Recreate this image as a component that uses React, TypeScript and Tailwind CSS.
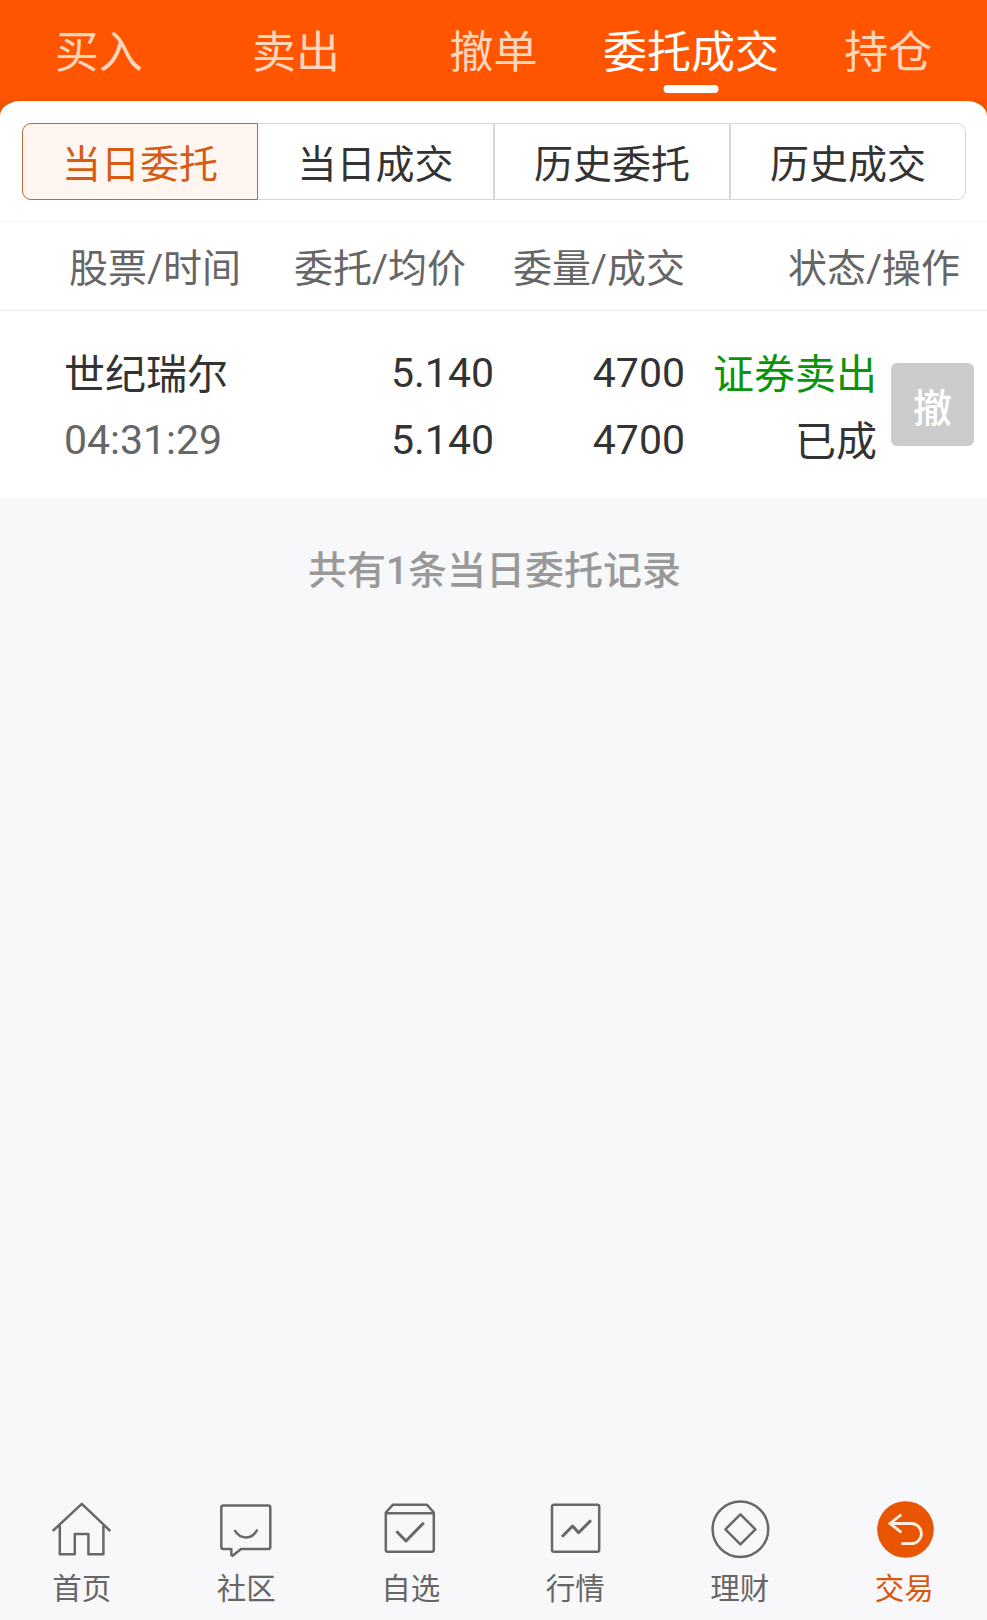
import type { ReactNode } from "react";

const tabs = ["买入", "卖出", "撤单", "委托成交", "持仓"];
const subTabs = ["当日委托", "当日成交", "历史委托", "历史成交"];

function Icon({ children }: { children: ReactNode }) {
  return (
    <svg
      className="h-[60px] w-[60px] shrink-0 overflow-visible"
      viewBox="0 0 60 60"
      fill="none"
      stroke="#686868"
      strokeWidth="2.5"
      strokeLinejoin="round"
    >
      {children}
    </svg>
  );
}

const navItems: { label: string; icon: ReactNode }[] = [
  {
    label: "首页",
    icon: (
      <Icon>
        <path d="M.7 32 29.8 4.8 58.3 32M7.8 26.5V55.3H22.8V35H36.4V55.3H51.4V26.5" />
      </Icon>
    ),
  },
  {
    label: "社区",
    icon: (
      <Icon>
        <path d="M6.3 6.5H51.3a2 2 0 0 1 2 2V48a2 2 0 0 1-2 2H24L15.6 56.8 14.3 56V50H6.3a2 2 0 0 1-2-2V8.5a2 2 0 0 1 2-2Z" />
        <path d="M17.6 31C23 41 35.5 41 40.3 30.5" />
      </Icon>
    ),
  },
  {
    label: "自选",
    icon: (
      <Icon>
        <path d="M12 5.7H45.8L52.8 13.5V50.7a2 2 0 0 1-2 2H6.8a2 2 0 0 1-2-2V13.5ZM4.8 14.3H52.8" />
        <path strokeWidth="3" d="M15.4 32.3 25 42 42.8 23.7" />
      </Icon>
    ),
  },
  {
    label: "行情",
    icon: (
      <Icon>
        <rect x="6" y="5.7" width="47.2" height="47" rx="2" />
        <path strokeWidth="3" d="M16 37.7 26.6 27 32.6 33.7 45 21.3" />
      </Icon>
    ),
  },
  {
    label: "理财",
    icon: (
      <Icon>
        <circle cx="30.4" cy="30.3" r="27.8" />
        <path d="M30.4 15.3 45.4 30.3 30.4 45.3 15.4 30.3Z" />
      </Icon>
    ),
  },
  {
    label: "交易",
    icon: (
      <Icon>
        <circle cx="30.5" cy="30.5" r="28.3" fill="#ea5504" stroke="none" />
        <path
          stroke="#fff0e2"
          strokeLinejoin="miter"
          strokeWidth="2.8"
          d="M26.3 15.7 15 24.5 26.3 33.3M15 24.5H36.3a10.1 10.1 0 0 1 0 20.2H26.3"
        />
      </Icon>
    ),
  },
];

export default function App() {
  return (
    <div className="flex h-[1620px] w-[987px] flex-col overflow-hidden bg-[#f7f8fa] font-[Roboto,'Noto_Sans_CJK_SC',sans-serif] text-[#333] whitespace-nowrap">
      <nav className="grid h-[101px] shrink-0 grid-cols-5 bg-[#ff5500] text-[44px] leading-[107px]">
        {tabs.map((tab, i) => (
          <div
            key={tab}
            className={i === 3 ? "relative flex justify-center text-white" : "flex justify-center text-[#ffd5bb]"}
          >
            {tab}
            {i === 3 && <span className="absolute top-[85px] left-1/2 h-2 w-[55px] -translate-x-1/2 rounded-full bg-white" />}
          </div>
        ))}
      </nav>

      <div className="z-10 shrink-0 bg-[linear-gradient(#ee5500_30px,#fff_30px)]">
        <div className="h-[121px] rounded-t-[20px_15px] border-b border-[#f6f6f6] bg-white px-[22px] pt-[22px]">
          <div className="grid h-[77px] w-[944px] grid-cols-4 grid-rows-[77px] text-[39px] leading-[82px]">
            {subTabs.map((tab, i) => (
              <div
                key={tab}
                className={
                  i === 0
                    ? "flex justify-center rounded-l-[9px] border border-[#b9683a] bg-[#fff6f2] text-[#d65c14]"
                    : i === 3
                      ? "flex justify-center rounded-r-[9px] border border-[#d3d7d7]"
                      : i === 1
                        ? "flex justify-center border border-l-0 border-[#d3d7d7]"
                        : "flex justify-center border border-[#d3d7d7]"
                }
              >
                {tab}
              </div>
            ))}
          </div>
        </div>
      </div>

      <div className="flex h-[89px] shrink-0 border-b border-[#e9e9e9] bg-white pl-[69px] text-[39px] leading-[94px] text-[#666]">
        <span className="w-[225px]">股票/时间</span>
        <span className="w-[219px]">委托/均价</span>
        <span className="w-[275px]">委量/成交</span>
        <span>状态/操作</span>
      </div>

      <div className="flex h-[187px] shrink-0 bg-white pt-[29px] text-[41px] leading-[67px]">
        <div className="w-[250px] pl-[64px]">
          <div className="h-[67px] leading-[70px]">世纪瑞尔</div>
          <div className="text-[#666]">04:31:29</div>
        </div>
        <div className="w-[244px] text-right">
          <div>5.140</div>
          <div>5.140</div>
        </div>
        <div className="w-[191px] text-right">
          <div>4700</div>
          <div>4700</div>
        </div>
        <div className="w-[192px] text-right">
          <div className="h-[67px] leading-[70px] text-[#099409]">证券卖出</div>
          <div className="h-[67px] leading-[70px]">已成</div>
        </div>
        <button className="mt-[23px] ml-[14px] h-[83px] w-[83px] rounded-[6px] bg-[#ccc] pt-[5px] text-center text-[39px] leading-[82px] font-medium text-white">
          撤
        </button>
      </div>

      <p className="pt-[43px] pl-[2px] text-center text-[39px] leading-[60px] font-medium text-[#999]">共有1条当日委托记录</p>

      <footer className="mt-auto grid h-[138px] shrink-0 grid-cols-6 bg-[#f8f8fb] pt-[17px] text-[29.5px] leading-[60px] text-[#666]">
        {navItems.map((item, i) => (
          <div
            key={item.label}
            className={i === 5 ? "flex flex-col items-center text-[#d9560e]" : "flex flex-col items-center"}
          >
            {item.icon}
            <span className="mr-px">{item.label}</span>
          </div>
        ))}
      </footer>
    </div>
  );
}
